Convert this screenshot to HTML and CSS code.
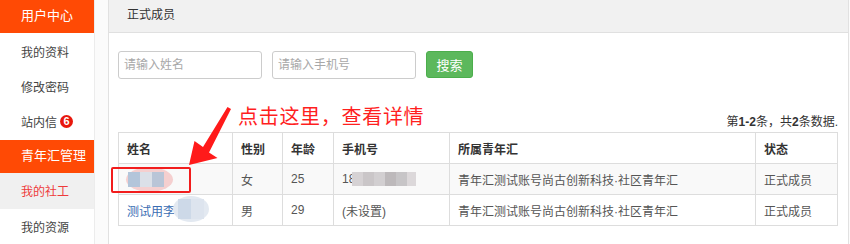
FILE: index.html
```html
<!DOCTYPE html>
<html lang="zh-CN">
<head>
<meta charset="utf-8">
<title>正式成员</title>
<link rel="stylesheet" href="styles.css">
</head>
<body>
<div class="page">
  <aside class="sidebar">
    <div class="side-head">用户中心</div>
    <a class="side-item">我的资料</a>
    <a class="side-item">修改密码</a>
    <a class="side-item">站内信<span class="badge">6</span></a>
    <div class="side-head">青年汇管理</div>
    <a class="side-item active">我的社工</a>
    <a class="side-item">我的资源</a>
  </aside>
  <main class="main">
    <section class="panel">
      <div class="panel-heading">正式成员</div>
      <div class="panel-body">
        <form class="search">
          <input class="field" type="text" placeholder="请输入姓名">
          <input class="field" type="text" placeholder="请输入手机号">
          <button class="btn" type="button">搜索</button>
        </form>
        <div class="summary">第<b>1-2</b>条，共<b>2</b>条数据.</div>
        <table class="grid">
          <colgroup>
            <col class="c-name"><col class="c-sex"><col class="c-age"><col class="c-phone"><col class="c-org"><col class="c-state">
          </colgroup>
          <thead>
            <tr><th>姓名</th><th>性别</th><th>年龄</th><th>手机号</th><th>所属青年汇</th><th>状态</th></tr>
          </thead>
          <tbody>
            <tr class="odd"><td><a class="link"></a></td><td>女</td><td>25</td><td>18</td><td>青年汇测试账号尚古创新科技·社区青年汇</td><td>正式成员</td></tr>
            <tr><td><a class="link">测试用李</a></td><td>男</td><td>29</td><td>(未设置)</td><td>青年汇测试账号尚古创新科技·社区青年汇</td><td>正式成员</td></tr>
          </tbody>
        </table>
      </div>
    </section>
  </main>

  <div class="mosaic m1"><span class="sq s-a"></span><span class="sq s-b"></span><span class="sq s-c"></span></div>
  <div class="mosaic m2"><span class="sq s-d"></span><span class="sq s-e"></span></div>
  <div class="mosaic m3"><span class="sq p1"></span><span class="sq p2"></span><span class="sq p3"></span><span class="sq p4"></span><span class="sq p5"></span><span class="sq p6"></span></div>

  <div class="note">点击这里，查看详情</div>
  <svg class="arrow" width="60" height="70" viewBox="0 0 60 70">
    <polygon points="39.5,0 43,2 21,45.5 29.5,51 1,58 6.5,34 15,40" fill="#ff1a1a"/>
  </svg>
  <div class="mark"></div>
</div>
</body>
</html>
```

FILE: styles.css
```css
* { box-sizing: border-box; }

html, body {
  margin: 0;
  padding: 0;
  background: #fff;
}

body {
  font-family: "Liberation Sans", "Noto Sans CJK SC", sans-serif;
  font-size: 12px;
  color: #333;
}

.page {
  position: relative;
  display: flex;
  width: 850px;
  height: 244px;
  overflow: hidden;
}

/* sidebar */
.sidebar {
  width: 95px;
  flex: none;
  display: flex;
  flex-direction: column;
  border-right: 1px solid #ececec;
  background: #fff;
}

.side-head {
  height: 33.5px;
  line-height: 32px;
  padding-left: 21px;
  background: #ff4a05;
  color: #fff;
  font-size: 13px;
}

.side-item {
  display: flex;
  align-items: center;
  height: 35.5px;
  padding-left: 21px;
  color: #444;
  font-size: 12px;
  text-decoration: none;
}

.side-item.active {
  background: #f0f0f0;
  color: #ee3b3b;
}

.badge {
  display: inline-flex;
  align-items: center;
  justify-content: center;
  width: 13px;
  height: 13px;
  margin-left: 3px;
  border-radius: 50%;
  background: #e8170c;
  color: #fff;
  font-size: 11px;
  font-weight: bold;
  line-height: 13px;
}

/* main */
.main {
  flex: 1;
  padding: 0 1px 0 13px;
  background: #fbfbfb;
}

.panel {
  height: 100%;
  background: #fff;
  border-left: 1px solid #e1e1e1;
  border-right: 1px solid #e1e1e1;
}

.panel-heading {
  height: 33px;
  line-height: 31px;
  padding-left: 18px;
  background: #f1f1f1;
  border-bottom: 1px solid #e0e0e0;
  color: #333;
  font-size: 12px;
}

.panel-body {
  padding: 18px 10px 0 9px;
}

.search {
  display: flex;
  gap: 10px;
  margin: 0;
}

.field {
  width: 144px;
  height: 28px;
  padding: 0 5px;
  border: 1px solid #ccc;
  border-radius: 3px;
  font-family: inherit;
  font-size: 12px;
  color: #555;
  background: #fff;
}

.field::placeholder { color: #a8a8a8; }

.btn {
  width: 47px;
  height: 27px;
  padding: 0;
  border: 1px solid #4cae4c;
  border-radius: 3px;
  background: #5cb85c;
  color: #fff;
  font-family: inherit;
  font-size: 13px;
}

.summary {
  margin-top: 35px;
  height: 18px;
  line-height: 17px;
  text-align: right;
  color: #333;
  font-size: 12px;
}

.grid {
  width: 100%;
  table-layout: fixed;
  border-collapse: collapse;
  border: 1px solid #dddddd;
}

.c-name { width: 114px; }
.c-sex { width: 50px; }
.c-age { width: 51px; }
.c-phone { width: 116px; }
.c-org { width: 306px; }
.c-state { width: 82px; }

.grid th, .grid td {
  height: 31px;
  padding: 0 8px;
  border: 1px solid #dddddd;
  text-align: left;
  white-space: nowrap;
  overflow: hidden;
  font-size: 12px;
}

.grid th { font-weight: bold; color: #333; }
.grid td { color: #555; }
.grid tr.odd td { background: #f9f9f9; }

.link { color: #3a6db3; text-decoration: none; }

/* privacy mosaics */
.mosaic {
  position: absolute;
  display: flex;
  align-items: center;
}

.sq { display: block; height: 100%; }

.m1 {
  left: 126px;
  top: 167px;
  width: 47px;
  height: 25px;
  padding: 5px 9px 5px 2px;
  border-radius: 50%;
  background: #f5cfcf;
}
.m1 .sq { width: 12px; }
.s-a { background: #b3c5da; }
.s-b { background: #dbe0e8; }
.s-c { background: #b9c5d7; }

.m2 {
  left: 173px;
  top: 196px;
  width: 36px;
  height: 26px;
  padding: 3px 5px;
  border-radius: 50%;
  background: #e3e9f1;
}
.m2 .sq { width: 13px; }
.s-d { background: #cdd9e8; }
.s-e { background: #dde4ee; }

.m3 {
  left: 352px;
  top: 172px;
  height: 14px;
}
.m3 .sq { width: 11px; }
.p1 { background: #d6d2d4; }
.p2 { background: #cac6c8; }
.p3 { background: #d2cfd1; }
.p4 { background: #bdb9bb; }
.p5 { background: #c7c5c7; }
.p6 { background: #dcd8da; width: 9px !important; }

/* annotation */
.note {
  position: absolute;
  left: 238px;
  top: 104px;
  line-height: 26px;
  font-size: 20px;
  letter-spacing: 0.7px;
  color: #ff1f1f;
  white-space: nowrap;
}

.arrow {
  position: absolute;
  left: 188px;
  top: 107px;
}

.mark {
  position: absolute;
  left: 111px;
  top: 167px;
  width: 80px;
  height: 26px;
  border: 2px solid #f21d1d;
  border-radius: 2px;
}
```
